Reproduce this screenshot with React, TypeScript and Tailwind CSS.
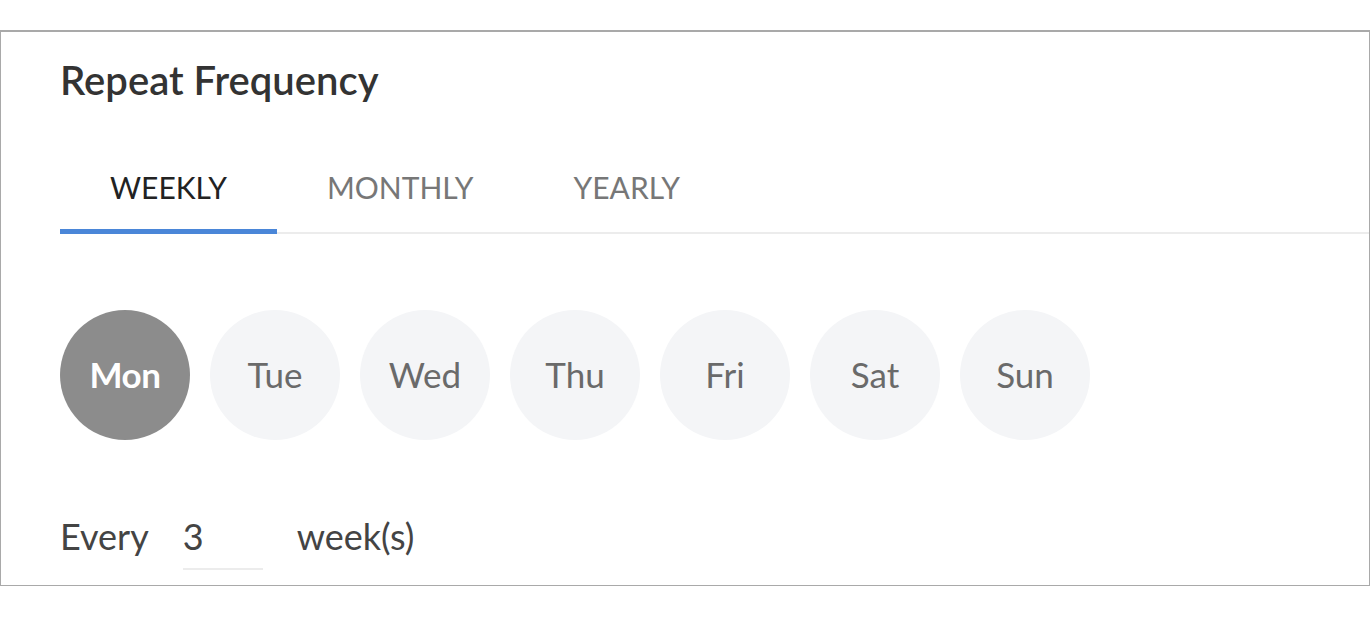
import React, { useState } from 'react';

const tabs = ['WEEKLY', 'MONTHLY', 'YEARLY'];
const days = ['Mon', 'Tue', 'Wed', 'Thu', 'Fri', 'Sat', 'Sun'];

export default function App() {
  const [tab, setTab] = useState('WEEKLY');
  const [selected, setSelected] = useState<string[]>(['Mon']);
  const [every, setEvery] = useState('3');

  const toggle = (d: string) =>
    setSelected((s) => (s.includes(d) ? s.filter((x) => x !== d) : [...s, d]));

  return (
    <div className="min-h-[620px] bg-white pt-[30px] font-['Lato','Noto_Sans',sans-serif]">
      <div className="h-[556px] border border-t-2 border-[#a9a9a9] pl-[59px]">
        {/* Title */}
        <h2 className="pt-[24px] text-[40px] font-semibold leading-[48px] text-[#333]">
          Repeat Frequency
        </h2>

        {/* Tabs */}
        <div className="mt-[63px] flex border-b-2 border-[#ececec]">
          {tabs.map((t) => (
            <button
              key={t}
              onClick={() => setTab(t)}
              className={
                t === tab
                  ? '-mb-[2px] border-b-[5px] border-[#4a86d8] px-[50px] pb-[22px] text-[30px] leading-[40px] text-[#222]'
                  : '-mb-[2px] border-b-[5px] border-transparent px-[50px] pb-[22px] text-[30px] leading-[40px] text-[#777]'
              }
            >
              {t}
            </button>
          ))}
        </div>

        {/* Days */}
        <div className="mt-[76px] flex gap-[20px]">
          {days.map((d) => (
            <button
              key={d}
              onClick={() => toggle(d)}
              className={
                selected.includes(d)
                  ? 'flex h-[130px] w-[130px] items-center justify-center rounded-full bg-[#8c8c8c] pb-[2px] text-[35px] font-bold tracking-[-0.5px] text-white'
                  : 'flex h-[130px] w-[130px] items-center justify-center rounded-full bg-[#f4f5f7] pb-[2px] text-[35px] text-[#6a6a6a]'
              }
            >
              {d}
            </button>
          ))}
        </div>

        {/* Every */}
        <div className="mt-[72px] flex items-start text-[36px] leading-[48px] text-[#444]">
          <span>Every</span>
          <input
            value={every}
            onChange={(e) => setEvery(e.target.value)}
            className="ml-[34px] w-[80px] border-b-2 border-[#ececec] bg-transparent pb-[8px] text-[36px] leading-[48px] text-[#444] outline-none"
          />
          <span className="ml-[34px]">week(s)</span>
        </div>
      </div>
    </div>
  );
}
